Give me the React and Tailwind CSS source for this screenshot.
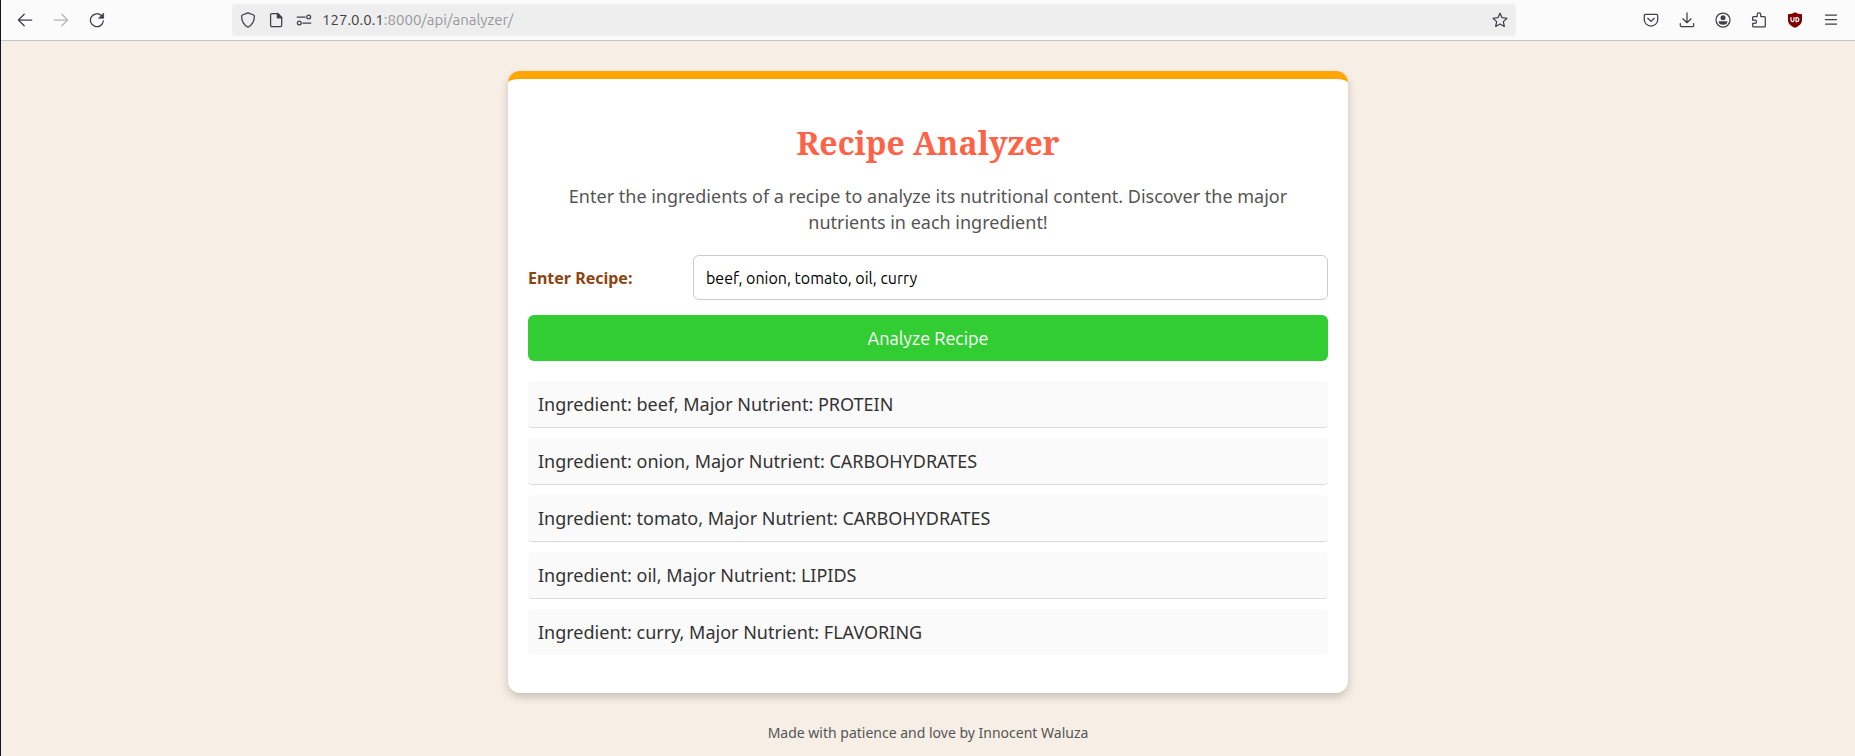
import { useState } from "react";

const RESULTS = [
  { ingredient: "beef", nutrient: "PROTEIN" },
  { ingredient: "onion", nutrient: "CARBOHYDRATES" },
  { ingredient: "tomato", nutrient: "CARBOHYDRATES" },
  { ingredient: "oil", nutrient: "LIPIDS" },
  { ingredient: "curry", nutrient: "FLAVORING" },
];

function Icon({ children }) {
  return (
    <svg
      viewBox="0 0 16 16"
      className="size-4 shrink-0"
      fill="none"
      stroke="currentColor"
      strokeWidth="1.25"
      strokeLinecap="round"
      strokeLinejoin="round"
      aria-hidden="true"
    >
      {children}
    </svg>
  );
}

const icons = {
  back: <path d="M14.8 8H1.5M7.2 2.2 1.4 8l5.8 5.8" />,
  forward: <path d="M1.2 8h13.300M8.800 2.200 14.600 8l-5.800 5.800" />,
  reload: (
    <>
      <path d="M14.400 8.800A6.500 6.500 0 1 1 12.400 3.500" />
      <path d="M14.600 1.400v4.800H9.900z" fill="currentColor" strokeWidth="0.8" />
    </>
  ),
  shield: (
    <path d="M8 .9 13.6 3c.5.2.8.6.8 1.1 0 5-2 9-6.4 11.1C3.600 13.100 1.600 9.100 1.600 4.100c0-.5.3-.9.8-1.100z" />
  ),
  page: (
    <>
      <path d="M3.900 1.500h5.800l4 4v7.800a1.300 1.300 0 0 1-1.300 1.300H3.900a1.300 1.300 0 0 1-1.300-1.300V2.800a1.300 1.300 0 0 1 1.300-1.300z" />
      <path d="M9.400 1.500v4.300h4.300z" fill="currentColor" />
    </>
  ),
  permissions: (
    <>
      <path d="M1.200 5h8M6.800 11h8" />
      <circle cx="12.700" cy="5" r="1.900" />
      <circle cx="3.300" cy="11" r="1.900" />
    </>
  ),
  star: (
    <path d="m8 1.200 2.050 4.450 4.900.6-3.600 3.350.95 4.850L8 12.050l-4.300 2.400.95-4.850L1.050 6.250l4.900-.6z" />
  ),
  pocket: (
    <>
      <path d="M2.600 2.400h10.800a1.300 1.300 0 0 1 1.300 1.300v4a6.700 6.300 0 0 1-13.400 0v-4a1.300 1.300 0 0 1 1.300-1.300z" />
      <path d="M4.800 6.300 8 9.400l3.200-3.100" />
    </>
  ),
  download: (
    <path d="M8 .8v9.800M3.900 6.800 8 10.700l4.100-3.900M1.300 11.500v1.700a1.400 1.400 0 0 0 1.400 1.400h10.600a1.400 1.400 0 0 0 1.400-1.400v-1.700" />
  ),
  account: (
    <>
      <circle cx="8" cy="8" r="7" />
      <circle cx="8" cy="5.700" r="2.500" fill="currentColor" stroke="none" />
      <path d="M3.600 9.300h8.800a4.400 3.500 0 0 1-8.800 0z" fill="currentColor" stroke="none" />
    </>
  ),
  extensions: (
    <path d="M2.600 4.600h3.600V2.700a1.800 1.800 0 0 1 3.600 0v1.900h3.500a1 1 0 0 1 1 1v8.300a1 1 0 0 1-1 1H2.700a1 1 0 0 1-1-1v-2.500h2.200a1.600 1.600 0 0 0 0-3.200H1.600V5.600a1 1 0 0 1 1-1z" />
  ),
  ublock: (
    <>
      <path d="M8 .3C10 1.500 12.500 2.200 15 2.300v5.600c0 3.800-3 6-7 7.900-4-1.900-7-4.100-7-7.900V2.300C3.500 2.200 6 1.500 8 .3z" fill="#800000" stroke="none" />
      <path d="M4 5.600v2.500a1.500 1.500 0 0 0 3 0V5.600M9 5.600v4h.8a2 2 0 0 0 0-4z" stroke="#ffffff" strokeWidth="1.200" />
    </>
  ),
  menu: <path d="M2.500 3h11M2.500 7.500h11M2.500 12h11" />,
};

function ToolButton({ label, icon, disabled = false }) {
  return (
    <button
      type="button"
      aria-label={label}
      disabled={disabled}
      className="flex h-8 w-9 items-center justify-center disabled:text-[#b4b4b6]"
    >
      <Icon>{icons[icon]}</Icon>
    </button>
  );
}

function BrowserToolbar() {
  return (
    <header className="flex items-center border-b border-[#c3c6c8] bg-[#fbfbfb] px-1.5 py-1 text-[#3f3f45]">
      <nav aria-label="History" className="flex">
        <ToolButton label="Back" icon="back" />
        <ToolButton label="Forward" icon="forward" disabled />
        <ToolButton label="Reload" icon="reload" />
      </nav>
      <div className="mx-[117px] flex h-8 flex-1 items-center rounded bg-[#eeeeee] px-2">
        <div className="flex items-center gap-3">
          <Icon>{icons.shield}</Icon>
          <Icon>{icons.page}</Icon>
          <Icon>{icons.permissions}</Icon>
        </div>
        <p className="ml-[10px] flex-1 font-['Ubuntu','Noto_Sans',sans-serif] text-[15px] leading-5 text-[#98989b]">
          <span className="text-[#3f3f45]">127.0.0.1</span>:8000/api/analyzer/
        </p>
        <button type="button" aria-label="Bookmark this page">
          <Icon>{icons.star}</Icon>
        </button>
      </div>
      <div className="flex">
        <ToolButton label="Save to Pocket" icon="pocket" />
        <ToolButton label="Downloads" icon="download" />
        <ToolButton label="Account" icon="account" />
        <ToolButton label="Extensions" icon="extensions" />
        <ToolButton label="uBlock" icon="ublock" />
        <ToolButton label="Menu" icon="menu" />
      </div>
    </header>
  );
}

export default function App() {
  const [recipe, setRecipe] = useState("beef, onion, tomato, oil, curry");

  return (
    <div className="flex min-h-screen flex-col border-l border-[#16161a] bg-[#f7efe5] font-['Noto_Sans',sans-serif] text-[#333333]">
      <BrowserToolbar />
      <main className="mx-auto mt-[30px] w-full max-w-[840px] rounded-xl border-t-8 border-[#ffa500] bg-white px-5 pt-10 pb-[38px] shadow-[0_4px_8px_rgba(0,0,0,0.2)]">
        <h1 className="text-center font-['Noto_Serif','DejaVu_Serif_Condensed','DejaVu_Serif',serif] text-[32px] leading-12 font-bold text-[#ff6347]">
          Recipe Analyzer
        </h1>
        <p className="mt-4 px-6 text-center text-[18px] leading-[26px] text-[#555555]">
          Enter the ingredients of a recipe to analyze its nutritional content. Discover the major
          nutrients in each ingredient!
        </p>
        <form className="mt-5" onSubmit={(event) => event.preventDefault()}>
          <div className="flex items-center">
            <label htmlFor="recipe" className="w-[165px] text-base font-bold text-[#8b4513]">
              Enter Recipe:
            </label>
            <input
              id="recipe"
              type="text"
              value={recipe}
              onChange={(event) => setRecipe(event.target.value)}
              className="h-[45px] min-w-0 flex-1 rounded-md border border-[#cccccc] bg-white px-3 font-['Ubuntu','Noto_Sans',sans-serif] text-base text-black"
            />
          </div>
          <button
            type="submit"
            className="mt-[15px] h-[46px] w-full rounded-md bg-[#32cd32] font-['Ubuntu','Noto_Sans',sans-serif] text-[18px] text-white"
          >
            Analyze Recipe
          </button>
        </form>
        <ul className="mt-5 flex flex-col gap-[10px]">
          {RESULTS.map(({ ingredient, nutrient }) => (
            <li
              key={ingredient}
              className="rounded border-b border-[#dddddd] bg-[#fafafa] p-[10px] text-[18px] leading-[26px] last:border-b-0"
            >
              Ingredient: {ingredient}, Major Nutrient: {nutrient}
            </li>
          ))}
        </ul>
      </main>
      <footer className="mt-[30px] text-center text-sm text-[#555555]">
        Made with patience and love by Innocent Waluza
      </footer>
    </div>
  );
}
